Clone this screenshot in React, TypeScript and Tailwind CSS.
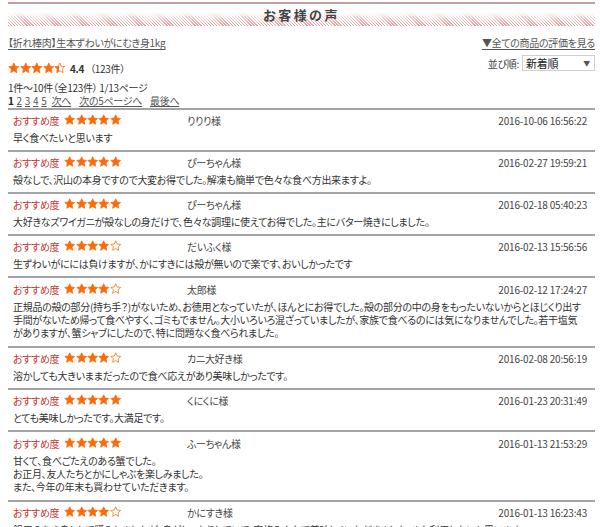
import { useId } from 'react';

const STAR_POINTS = '12,1.6 15.1,8.4 22.4,9.2 16.9,14.2 18.4,21.6 12,17.9 5.6,21.6 7.1,14.2 1.6,9.2 8.9,8.4';
const ORANGE = '#fa6b0c';

type Review = {
  score: number;
  name: string;
  date: string;
  lines: string[];
};

const REVIEWS: Review[] = [
  { score: 5, name: 'りりり様', date: '2016-10-06 16:56:22', lines: ['早く食べたいと思います'] },
  {
    score: 5,
    name: 'ぴーちゃん様',
    date: '2016-02-27 19:59:21',
    lines: ['殻なしで、沢山の本身ですので大変お得でした。解凍も簡単で色々な食べ方出来ますよ。'],
  },
  {
    score: 5,
    name: 'ぴーちゃん様',
    date: '2016-02-18 05:40:23',
    lines: ['大好きなズワイガニが殻なしの身だけで、色々な調理に使えてお得でした。主にバター焼きにしました。'],
  },
  {
    score: 4,
    name: 'だいふく様',
    date: '2016-02-13 15:56:56',
    lines: ['生ずわいがにには負けますが、かにすきには殻が無いので楽です、おいしかったです'],
  },
  {
    score: 4,
    name: '太郎様',
    date: '2016-02-12 17:24:27',
    lines: [
      '正規品の殻の部分(持ち手？)がないため、お徳用となっていたが、ほんとにお得でした。殻の部分の中の身をもったいないからとほじくり出す',
      '手間がないため帰って食べやすく、ゴミもでません。大小いろいろ混ざっていましたが、家族で食べるのには気になりませんでした。若干塩気',
      'がありますが、蟹シャブにしたので、特に問題なく食べられました。',
    ],
  },
  {
    score: 4,
    name: 'カニ大好き様',
    date: '2016-02-08 20:56:19',
    lines: ['溶かしても大きいままだったので食べ応えがあり美味しかったです。'],
  },
  { score: 5, name: 'くにくに様', date: '2016-01-23 20:31:49', lines: ['とても美味しかったです。大満足です。'] },
  {
    score: 5,
    name: 'ふーちゃん様',
    date: '2016-01-13 21:53:29',
    lines: [
      '甘くて、食べごたえのある蟹でした。',
      'お正月、友人たちとかにしゃぶを楽しみました。',
      'また、今年の年末も買わせていただきます。',
    ],
  },
  {
    score: 4,
    name: 'かにすき様',
    date: '2016-01-13 16:23:43',
    lines: ['鍋用のむき身として購入しましたが、身がしっかりしていて、家族みんなで美味しくいただきました。また利用したいと思います。'],
  },
];

function Star({ fill, className }: { fill: number; className: string }) {
  const id = useId();
  const paint = fill >= 1 ? ORANGE : fill <= 0 ? '#fff' : `url(#${id})`;
  return (
    <svg viewBox="0 0 24 24" className={className}>
      {fill > 0 && fill < 1 && (
        <defs>
          <linearGradient id={id} x1="0" x2="1" y1="0" y2="0">
            <stop offset={fill} stopColor={ORANGE} />
            <stop offset={fill} stopColor="#fff" />
          </linearGradient>
        </defs>
      )}
      <polygon points={STAR_POINTS} fill={paint} stroke={ORANGE} strokeWidth="1.6" strokeLinejoin="round" />
    </svg>
  );
}

function Stars({ value, className }: { value: number; className: string }) {
  return (
    <span className="flex items-center">
      {[0, 1, 2, 3, 4].map((i) => (
        <Star key={i} fill={Math.max(0, Math.min(1, value - i))} className={className} />
      ))}
    </span>
  );
}

export default function App() {
  return (
    <div
      className="min-h-screen bg-white pl-[8px] pr-[5px] text-[10px] tracking-[-0.3px] text-[#333] [font-feature-settings:'palt']"
      style={{ fontFamily: "'Noto Sans CJK JP', 'Noto Sans', sans-serif" }}
    >
      <div className="pt-[2px]">
        <div className="border-t-2 border-[#c4a0a0]" />
        <div className="flex h-[22px] items-center justify-center pb-[1px] bg-[linear-gradient(to_bottom,#fff_35%,rgba(255,255,255,0.1)_100%),repeating-linear-gradient(45deg,#ec8c8c_0_1px,#fff_1px_2.2px)]">
          <h2 className="text-[13px] font-bold tracking-[2.5px] text-[#444]">お客様の声</h2>
        </div>
      </div>

      <div className="mt-[9px] flex h-[16px] items-center justify-between leading-[16px]">
        <a href="#" className="text-[#555] underline underline-offset-2">
          【折れ棒肉】生本ずわいがにむき身1kg
        </a>
        <a href="#" className="text-[#555] underline underline-offset-2">
          ▼全ての商品の評価を見る
        </a>
      </div>

      <div className="flex items-start justify-between">
        <div>
          <div className="mt-[9px] flex h-[16px] items-center">
            <Stars value={4.4} className="h-[12px] w-[11.6px]" />
            <span className="ml-[4px] font-bold">4.4</span>
            <span className="ml-[6px]">（123件）</span>
          </div>
          <div className="mt-[5px] h-[13px] leading-[13px]">1件～10件（全123件） 1/13ページ</div>
          <div className="flex h-[13px] items-center gap-x-[3px] leading-[13px]">
            <span className="font-bold text-[#222]">1</span>
            {['2', '3', '4', '5'].map((p) => (
              <a key={p} href="#" className="text-[#555] underline">
                {p}
              </a>
            ))}
            <a href="#" className="ml-[2px] text-[#555] underline">
              次へ
            </a>
            <a href="#" className="ml-[5px] text-[#555] underline">
              次の5ページへ
            </a>
            <a href="#" className="ml-[5px] text-[#555] underline">
              最後へ
            </a>
          </div>
        </div>
        <div className="mt-[4px] flex items-center">
          <span className="mr-[3px] text-[#444]">並び順:</span>
          <div className="flex h-[16px] w-[73px] items-center justify-between border border-[#d0d0d0] bg-white pl-[3px] pr-[4px]">
            <span className="text-[11px] text-[#222]">新着順</span>
            <span className="text-[7px] text-[#555]">▼</span>
          </div>
        </div>
      </div>

      <div className="mt-[1px]">
        {REVIEWS.map((r, i) => (
          <div
            key={i}
            className={
              r.lines.length > 1
                ? 'border-t-2 border-[#a3a3a3] pt-[3px] pb-[7px]'
                : 'border-t-2 border-[#a3a3a3] pt-[2px] pb-[6px]'
            }
          >
            <div className="flex h-[16px] items-center">
              <div className="flex w-[179px] items-center pl-[5px]">
                <span className="text-[#c8332f]">おすすめ度</span>
                <span className="ml-[5px]">
                  <Stars value={r.score} className="h-[11.5px] w-[11.4px]" />
                </span>
              </div>
              <span className="flex-1 text-[#444]">{r.name}</span>
              <span className="mr-[8px] text-[10px] tracking-[-0.2px] text-[#444]">{r.date}</span>
            </div>
            <div className="mt-[3px] pl-[5px] leading-[13px] whitespace-nowrap">
              {r.lines.map((l, j) => (
                <div key={j}>{l}</div>
              ))}
            </div>
          </div>
        ))}
      </div>
    </div>
  );
}
